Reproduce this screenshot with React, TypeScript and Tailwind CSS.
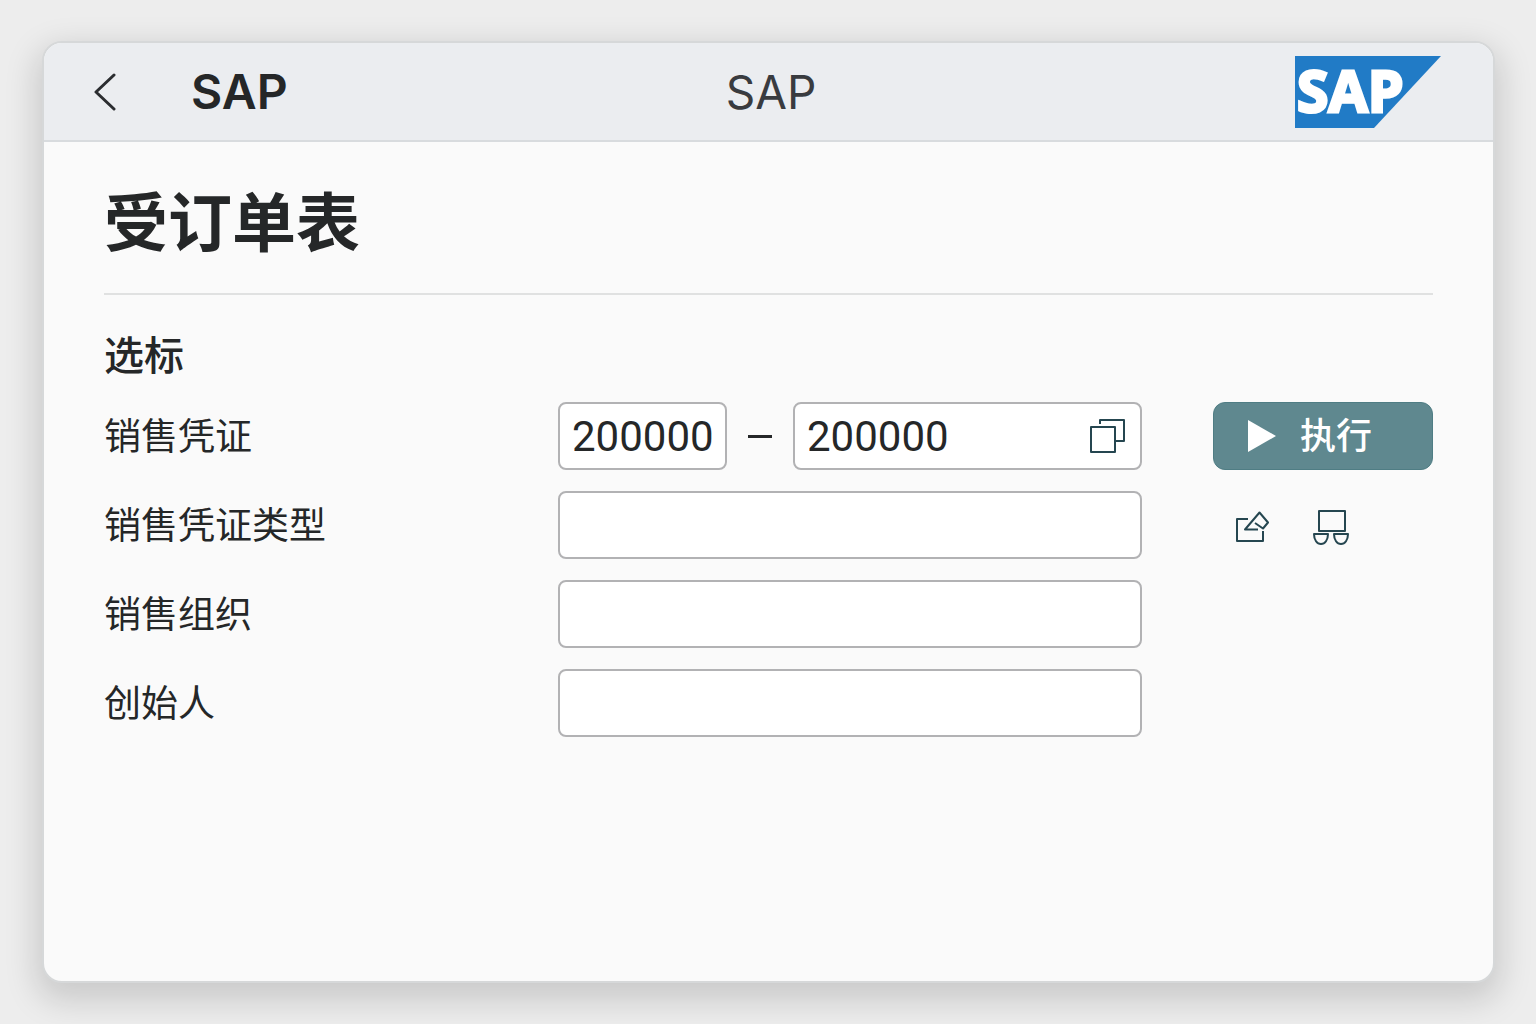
import type { ReactNode } from "react";

const inputStyle =
  "h-[68px] w-full rounded-lg border-2 border-[#b2b2b4] bg-white px-3 font-[Roboto,sans-serif] text-[42px] text-[#252728] outline-none focus:border-[#5f888f]";

function SapLogo() {
  return (
    <svg width="146" height="72" viewBox="0 0 146 72" className="overflow-visible" role="img" aria-label="SAP">
      <path d="M0 0H146L79 72H0Z" fill="#217bc6" />
      <text
        x="2"
        y="56"
        fill="#fff"
        stroke="#fff"
        strokeWidth="3"
        fontSize="57"
        fontWeight="700"
        fontFamily="'Open Sans', 'Noto Sans', sans-serif"
      >
        SAP
      </text>
    </svg>
  );
}

function CopyIcon() {
  return (
    <svg width="36" height="36" viewBox="0 0 36 36" fill="none" stroke="#254650" strokeWidth="2" strokeLinejoin="round">
      <path d="M10 6V2H34V23H25" />
      <path d="M1 9H25V34H1Z" />
    </svg>
  );
}

function EditIcon() {
  return (
    <svg width="34" height="32" viewBox="0 0 34 32" fill="none" stroke="#254650" strokeWidth="2" strokeLinejoin="round">
      <path d="M13 8H2V30H28V20" />
      <path d="M23 18.5H10L24.5 1.5L33 11.5L28 17.5L20 12" />
    </svg>
  );
}

function VariantIcon() {
  return (
    <svg width="36" height="36" viewBox="0 0 36 36" fill="none" stroke="#254650" strokeWidth="2" strokeLinejoin="round">
      <path d="M6 2H32V22H6Z" />
      <path d="M1 25H15C15 31 12 35 8 35S1 31 1 25Z" />
      <path d="M21 25H35C35 31 32 35 28 35S21 31 21 25Z" />
    </svg>
  );
}

function Row({ id, label, children, actions }: { id: string; label: string; children?: ReactNode; actions?: ReactNode }) {
  return (
    <div className="grid grid-cols-[454px_minmax(0,1fr)_291px] items-center">
      <label htmlFor={id} className="text-[37px] leading-[68px]">{label}</label>
      {children ?? <input id={id} type="text" className={inputStyle} />}
      <div className="pl-[71px]">{actions}</div>
    </div>
  );
}

export default function App() {
  return (
    <div className="flex min-h-screen bg-[#ededed] py-[41px] pr-[41px] pl-[42px] font-['Noto_Sans','Noto_Sans_CJK_SC',sans-serif] text-[#252728]">
      <div className="flex-1 overflow-hidden rounded-[20px] border-2 border-[#d6d8d9] bg-[#fafafa] shadow-[0_12px_32px_6px_rgba(0,0,0,0.15)]">
        <header className="grid h-[99px] grid-cols-[1fr_auto_1fr] items-center border-b-2 border-[#d8dbde] bg-[#ebedf0] pt-px pr-[52px] pl-[57px]">
          <div className="flex items-center">
            <button type="button" aria-label="返回" className="-ml-2 mr-[74px]">
              <svg width="24" height="38" viewBox="0 0 24 38" fill="none" stroke="#2b2d30" strokeWidth="3" strokeLinecap="round" strokeLinejoin="round">
                <path d="M21 2L3 19L21 36" />
              </svg>
            </button>
            <span className="font-[Inter,sans-serif] text-5xl font-semibold">SAP</span>
          </div>
          <span className="font-[Inter,sans-serif] text-[46px] leading-[48px] text-[#393b3f]">SAP</span>
          <div className="flex justify-end">
            <SapLogo />
          </div>
        </header>

        <main className="px-[60px]">
          <h1 className="border-b-2 border-[#e0e1e1] pt-8 pb-6 text-[64px] leading-[95px] font-bold">受订单表</h1>
          <form onSubmit={(e) => e.preventDefault()}>
            <h2 className="pt-8 pb-[19px] text-[40px] leading-[56px] font-medium">选标</h2>
            <div className="flex flex-col gap-[21px]">
              <Row
                id="doc-from"
                label="销售凭证"
                actions={
                  <button type="submit" className="flex h-[68px] w-full items-center rounded-xl border border-[#4f7d84] bg-[#5f888f] pl-[34px] text-4xl font-medium text-white">
                    <svg width="28" height="34" viewBox="0 0 28 34" fill="currentColor" className="mr-6">
                      <path d="M0 1L28 17L0 33Z" />
                    </svg>
                    执行
                  </button>
                }
              >
                <div className="flex items-center">
                  <div className="w-[169px] shrink-0">
                    <input id="doc-from" type="text" defaultValue="200000" className={inputStyle} />
                  </div>
                  <span className="mx-[21px] h-[3px] w-6 shrink-0 bg-[#252728]" />
                  <div className="relative flex-1">
                    <input type="text" aria-label="销售凭证至" defaultValue="200000" className={inputStyle} />
                    <button type="button" aria-label="多项选择" className="absolute top-4 right-4">
                      <CopyIcon />
                    </button>
                  </div>
                </div>
              </Row>
              <Row
                id="doc-type"
                label="销售凭证类型"
                actions={
                  <div className="flex items-center gap-11 pt-1 pl-[22px]">
                    <button type="button" aria-label="编辑"><EditIcon /></button>
                    <button type="button" aria-label="变式"><VariantIcon /></button>
                  </div>
                }
              />
              <Row id="sales-org" label="销售组织" />
              <Row id="creator" label="创始人" />
            </div>
          </form>
        </main>
      </div>
    </div>
  );
}
